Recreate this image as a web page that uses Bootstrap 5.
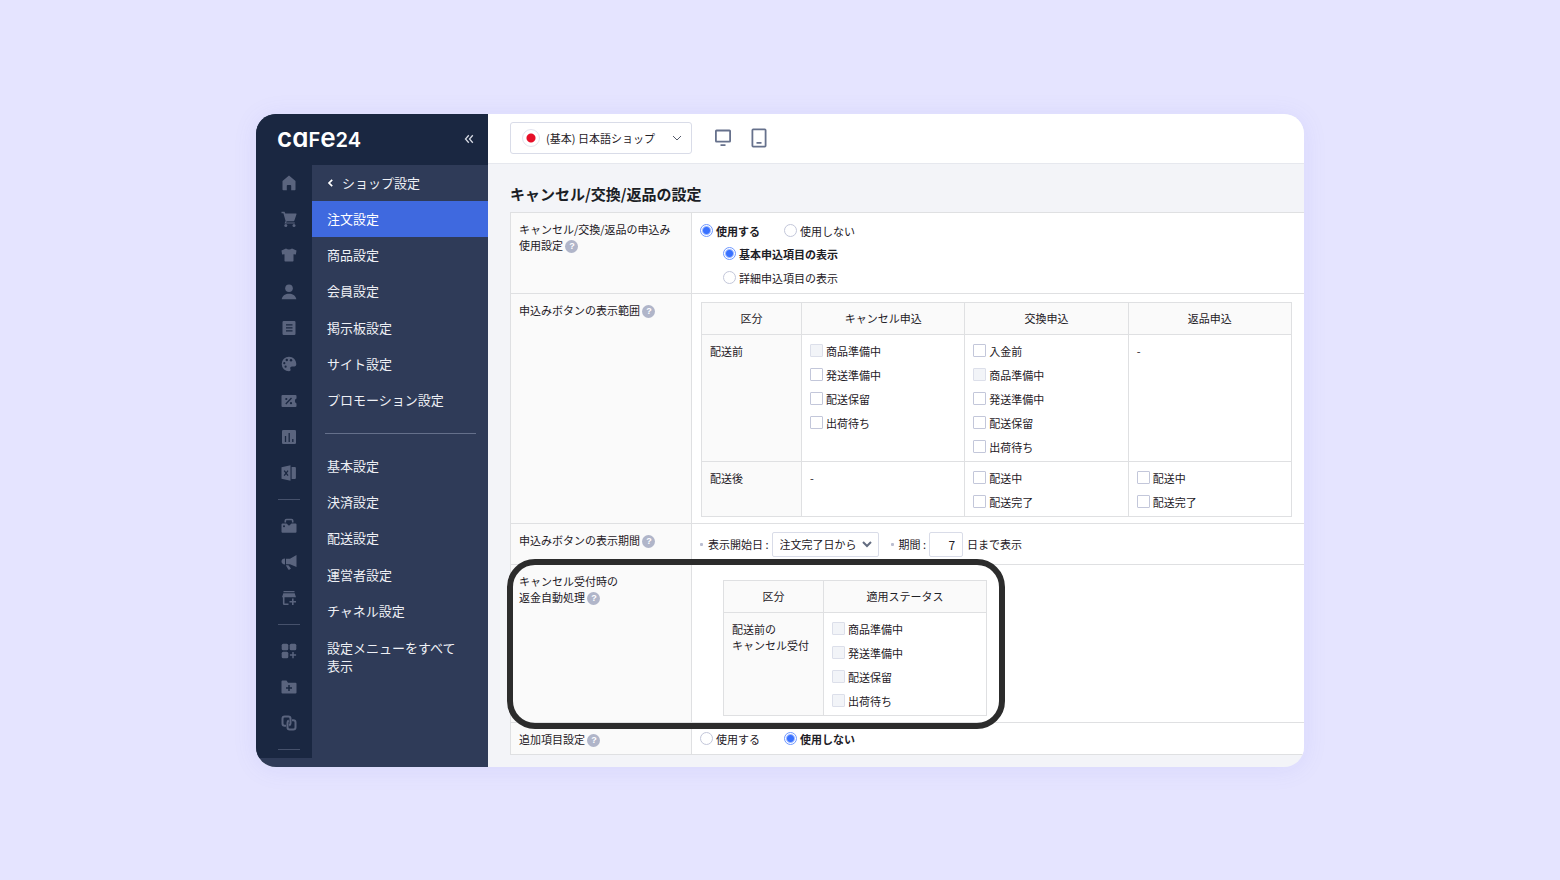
<!DOCTYPE html>
<html lang="ja">
<head>
<meta charset="utf-8">
<meta name="viewport" content="width=device-width, initial-scale=1">
<title>キャンセル/交換/返品の設定</title>
<link href="https://cdn.jsdelivr.net/npm/bootstrap@5.3.0/dist/css/bootstrap.min.css" rel="stylesheet">
<style>
  :root { --navy: #1a2741; --slate: #2f3b58; --active: #3f69df; --line: #dfe0e2; --ink: #1e2026; }
  body { font: 400 11px/16px "Noto Sans CJK JP", sans-serif; color: var(--ink); background: #e5e4ff; }
  .stage { padding: 24px 256px; }
  .app-window { border-radius: 20px; background: #f3f4f8; box-shadow: 0 2px 24px rgba(110, 110, 230, .1); }

  /* sidebar */
  .side { width: 232px; background: var(--slate); }
  .side-head { height: 51px; background: var(--navy); padding: 0 14px 0 21px; }
  .logo { font-family: Inter, sans-serif; font-weight: 600; color: #fff; font-size: 26px; line-height: 28px; font-feature-settings: "cv11"; }
  .logo .caps { font-size: 20px; }
  .fold { color: #d4d8e2; }
  .rail { width: 56px; background: var(--navy); color: #5a647e; }
  .rail-group a { color: inherit; padding-left: 9px; flex: 1; }
  .rail hr { width: 22px; margin: 7px 0 8px 22px; border-color: #5a647e; opacity: .7; }
  .rail svg { width: 18px; height: 18px; fill: currentColor; }
  .rail .outline { fill: none; stroke: currentColor; stroke-width: 2; }
  .g9 { min-height: 327px; }
  .g3 { min-height: 109px; }
  .menu { font-size: 13px; line-height: 18px; }
  .menu a { color: #eef0f5; padding: 9px 15px; flex: 1 1 auto; }
  .menu a.active { background: var(--active); color: #fff; }
  .menu hr { margin: 14px 12px 14px 13px; border-color: #8b95ad; opacity: .6; }
  .m7 { min-height: 254px; }
  .m5 { min-height: 182px; }

  /* top bar */
  .topbar { height: 50px; border-bottom: 1px solid #e6e8ee; padding: 0 22px; color: #66718c; }
  .topbar .btn { color: inherit; }
  .devices { gap: 20px; margin-left: 23px; }
  .shop-select { width: 182px; height: 32px; border-color: #d9dce8; border-radius: 3px; color: var(--ink); font-size: 11px; line-height: 16px; padding: 0 24px 0 35px;
    background: #fff url("data:image/svg+xml,%3Csvg xmlns='http://www.w3.org/2000/svg' width='10' height='6' fill='none' stroke='%23555b6b'%3E%3Cpath d='M1 1l4 4 4-4'/%3E%3C/svg%3E") no-repeat right 9px center; background-size: 10px 6px; }
  .flag { width: 18px; height: 18px; left: 12px; top: 7px; border: 1px solid #e2e3ee; border-radius: 50%; background: radial-gradient(circle, #e60f28 4px, #fff 5px); pointer-events: none; }

  /* settings */
  .main-pane { padding: 18px 0 12px 22px; }
  h1 { font-size: 15px; line-height: 24px; font-weight: 700; margin: 0 0 6px; color: #1b1e26; }
  .settings, .scope { border-collapse: collapse; color: inherit; }
  .settings { width: 100%; background: #fff; }
  .settings th, .settings td { border: 1px solid var(--line); vertical-align: top; }
  .settings > tbody > tr > th, .settings > tbody > tr > td { border-right: 0; }
  .settings th { font-weight: 400; background: #fafafa; padding: 8px 8px 7px; }
  .settings td { padding: 8px 8px 7px; }
  .settings .lbl { width: 181px; }
  .settings .wide { padding: 8px 12px 6px 9px; }
  .settings .inset { padding: 15px 8px 6px 31px; }
  .scope { table-layout: fixed; }
  .settings .scope thead th { text-align: center; padding: 8px; line-height: 15px; }
  .scope .kind { width: 100px; }
  .settings .scope tbody td { padding: 8px 8px 6px; }
  .opts { display: grid; gap: 8px; }
  .opt { display: flex; align-items: center; gap: 3px; line-height: 16px; }
  .opt .form-check-input { float: none; margin: 0; }
  .form-check-input { width: 13px; height: 13px; flex: none; border-color: #c3c7da; box-shadow: none; }
  .form-check-input[type=checkbox] { border-radius: 1px; }
  .form-check-input:disabled { background: #f2f4f8; border-color: #dcdfea; opacity: 1; }
  .form-check-input:disabled ~ label { opacity: 1; }
  .form-check-input[type=radio]:checked { background: radial-gradient(circle, #3971ff 0 3px, #fff 5px); border-color: #6f98ff; }
  .form-check-input:checked ~ label { font-weight: 700; }
  .help { width: 13px; height: 13px; border: 0; border-radius: 50%; background: #b0b5c9; color: #fff; font: 700 9px/13px "Liberation Sans", sans-serif; padding: 0; vertical-align: 1px; }
  .radios { padding-top: 2px; }
  .sub-opts { margin: 7px 0 0 23px; }
  .dot { width: 3px; height: 3px; margin-right: 5px; background: #b9bdd0; border-radius: 1px; }
  .day-select + .dot { margin-left: 12px; }
  .day-select { width: 107px; height: 25px; font-size: 11px; line-height: 16px; padding: 0 20px 0 7px; border-color: #d9dce8; border-radius: 2px; color: inherit;
    background: #fff url("data:image/svg+xml,%3Csvg xmlns='http://www.w3.org/2000/svg' width='10' height='7' fill='none' stroke='%23636c80' stroke-width='2'%3E%3Cpath d='M1 1l4 4 4-4'/%3E%3C/svg%3E") no-repeat right 6px center; background-size: 10px 7px; }
  .day-input { width: 34px; height: 25px; font-size: 12px; line-height: 16px; padding: 0 7px; border-color: #d9dce8; border-radius: 2px; color: inherit; text-align: right; }
  .period label { margin-right: 3px; }
  .focus-box { top: -6px; left: -4px; width: 498px; height: 170px; border: 6px solid #2c2c2c; border-radius: 28px; pointer-events: none; z-index: 2; }
</style>
</head>
<body>
<div class="stage min-vh-100 d-flex align-items-center">
  <div class="app-window d-flex w-100 overflow-hidden">

    <aside class="side flex-shrink-0 d-flex flex-column">
      <div class="side-head d-flex align-items-center justify-content-between">
        <a href="#" class="logo text-decoration-none">ca<span class="caps">F</span>e<span class="caps">24</span></a>
        <button type="button" class="fold btn p-0 border-0 lh-1" aria-label="メニューを閉じる">
          <svg class="d-block" width="10" height="10" viewBox="0 0 10 10" fill="none" stroke="currentColor" stroke-width="1.3"><path d="M4.8 1.2 1.5 5l3.3 3.8M8.8 1.2 5.5 5l3.3 3.8"/></svg>
        </button>
      </div>
      <div class="d-flex align-items-start">
        <nav class="rail flex-shrink-0" aria-label="メイン">
          <div class="rail-group g9 d-flex flex-column">
            <a href="#" class="d-flex align-items-center justify-content-center" aria-label="ホーム"><svg viewBox="0 0 18 18"><path d="M9 1.5 2.5 7v8.5q0 .8.8.8h3.5v-4.6q0-.8.8-.8h2.8q.8 0 .8.8v4.6h3.5q.8 0 .8-.8V7z"/></svg></a>
            <a href="#" class="d-flex align-items-center justify-content-center" aria-label="注文"><svg viewBox="0 0 18 18"><path d="M1.5 1.8h3l.8 1.700H16q.8 0 .5.800l-2.100 6.300q-.2.700-.9.700H6.700l-.6 1.300h8.700v.9H4.500l1.100-2.600L3.400 3.200H1.500z"/><circle cx="5.800" cy="15.500" r="1.500"/><circle cx="14" cy="15.500" r="1.500"/></svg></a>
            <a href="#" class="d-flex align-items-center justify-content-center" aria-label="商品"><svg viewBox="0 0 18 18"><path d="M6 2.500q3 2 6 0l4.500 2-.6 4-2.400-.3v6.600q0 .7-.7.7H5.200q-.7 0-.7-.7V8.200l-2.400.3-.6-4z"/></svg></a>
            <a href="#" class="d-flex align-items-center justify-content-center" aria-label="顧客"><svg viewBox="0 0 18 18"><circle cx="9" cy="5.200" r="3.800"/><path d="M1.700 16.200C2.500 12.500 5.500 10.800 9 10.800s6.500 1.700 7.300 5.400z"/></svg></a>
            <a href="#" class="d-flex align-items-center justify-content-center" aria-label="掲示板"><svg viewBox="0 0 18 18"><path fill-rule="evenodd" d="M3.700 2h10.600q1.200 0 1.200 1.200v11.600q0 1.200-1.200 1.200H3.700q-1.200 0-1.200-1.200V3.200Q2.500 2 3.700 2zM6 5.300v1.300h6.500V5.300zm0 3v1.300h6.500V8.300zm0 3v1.300h6.500v-1.300z"/></svg></a>
            <a href="#" class="d-flex align-items-center justify-content-center" aria-label="デザイン"><svg viewBox="0 0 18 18"><path d="M9 1.700a7.300 7.300 0 1 0 0 14.600c1.500 0 2-1 1.400-2.200-.5-1.200 0-2.600 1.700-2.600h2.200c1.400 0 2-1 2-2.200C16.300 4.800 13 1.700 9 1.700z"/><g fill="#1a2741"><circle cx="4.300" cy="8.200" r="1.100"/><circle cx="6.800" cy="5" r="1.200"/><circle cx="11" cy="5.200" r="1.200"/><circle cx="5.600" cy="11.700" r="1.100"/></g></svg></a>
            <a href="#" class="d-flex align-items-center justify-content-center" aria-label="プロモーション"><svg viewBox="0 0 18 18"><path d="M2.500 3h13q1 0 1 1v2.600q-1.600.5-1.600 2.400t1.600 2.400V14q0 1-1 1h-13q-1 0-1-1V4q0-1 1-1z"/><path d="m5.800 12 5.700-6" stroke="#1a2741" stroke-width="1.300"/><g fill="#1a2741"><circle cx="6.300" cy="7" r="1.100"/><circle cx="11" cy="11.200" r="1.100"/></g></svg></a>
            <a href="#" class="d-flex align-items-center justify-content-center" aria-label="統計"><svg viewBox="0 0 18 18"><rect x="2" y="2" width="14" height="14" rx="1.300"/><path d="M5.500 14V8M9.200 14V5M12.800 14v-3" stroke="#1a2741" stroke-width="1.300"/></svg></a>
            <a href="#" class="d-flex align-items-center justify-content-center" aria-label="エクセル"><svg viewBox="0 0 18 18"><path d="M1.500 3.300 10.500 1.300v15.400l-9-2zM11.600 3h3.300q1 0 1 1v10q0 1-1 1h-3.300z"/><path d="m4.200 6.600 3.800 5M8 6.600l-3.800 5" stroke="#1a2741" stroke-width="1.300"/></svg></a>
          </div>
          <hr>
          <div class="rail-group g3 d-flex flex-column">
            <a href="#" class="d-flex align-items-center justify-content-center" aria-label="マーケット"><svg viewBox="0 0 18 18"><path d="M2.500 6.500h4L9 8.700l2.500-2.200h4q1 0 1 1v7.300q0 1-1 1h-13q-1 0-1-1V7.500q0-1 1-1z"/><path d="M5.300 5.600V3.700q0-1.200 1.200-1.200h5q1.200 0 1.200 1.200v1.900" fill="none" stroke="currentColor" stroke-width="1.600"/><circle cx="4" cy="9.200" r="1" fill="#1a2741"/></svg></a>
            <a href="#" class="d-flex align-items-center justify-content-center" aria-label="広告"><svg viewBox="0 0 18 18"><path d="M16.500 2v12L10 11.300H6V5.700h4zM5 5.600v5.800C2.800 11.400 1.500 10.200 1.500 8.500S2.800 5.600 5 5.600zM5.800 12.300h2.600l2.600 3.300-1.700 1.200q-.5.200-1-.3z"/></svg></a>
            <a href="#" class="d-flex align-items-center justify-content-center" aria-label="チャネル"><svg viewBox="0 0 18 18"><path d="M3.500 2h11v1.200h-11zM3.300 4.200h11.400l1.300 4H2z"/><path d="M3.700 8v6.800q0 .5.500.5h4.300M12.800 9.500v6.500M9.500 12.800H16" fill="none" stroke="currentColor" stroke-width="1.600"/></svg></a>
          </div>
          <hr>
          <div class="rail-group g3 d-flex flex-column">
            <a href="#" class="d-flex align-items-center justify-content-center" aria-label="アプリ"><svg viewBox="0 0 18 18"><rect x="1.700" y="1.700" width="6.600" height="6.600" rx="1.500"/><rect x="9.700" y="1.700" width="6.600" height="6.600" rx="1.500"/><rect x="1.700" y="9.700" width="6.600" height="6.600" rx="1.500"/><path d="M13 10v6.200M9.900 13.100h6.200" stroke="currentColor" stroke-width="1.500"/></svg></a>
            <a href="#" class="d-flex align-items-center justify-content-center" aria-label="フォルダ"><svg viewBox="0 0 18 18"><path d="M2.500 2.500h4L8 4.700h7.500q1 0 1 1v8.800q0 1-1 1h-13q-1 0-1-1v-11q0-1 1-1z"/><path d="M9 7v6M6 10h6" stroke="#1a2741" stroke-width="1.500"/></svg></a>
            <a href="#" class="d-flex align-items-center justify-content-center" aria-label="連携"><svg class="outline" viewBox="0 0 18 18"><path d="M6 11.800H4.700q-2.200 0-2.200-2.200V4.700q0-2.200 2.200-2.200h3.600q2.200 0 2.200 2.200v4.600q0 1.500-1.300 2.200"/><path d="M12 6.200h1.300q2.200 0 2.200 2.200v4.900q0 2.200-2.200 2.200H9.700q-2.200 0-2.200-2.200V8.700q0-1.500 1.300-2.200"/></svg></a>
          </div>
          <hr>
        </nav>

        <nav class="menu flex-fill" aria-label="ショップ設定">
          <div class="m7 d-flex flex-column">
            <a href="#" class="text-decoration-none d-flex align-items-center"><svg class="me-2" width="7" height="8" viewBox="0 0 7 8" fill="none" stroke="#fff" stroke-width="1.700"><path d="M5.200.8 2 4l3.200 3.200"/></svg>ショップ設定</a>
            <a href="#" class="text-decoration-none active" aria-current="page">注文設定</a>
            <a href="#" class="text-decoration-none">商品設定</a>
            <a href="#" class="text-decoration-none">会員設定</a>
            <a href="#" class="text-decoration-none">掲示板設定</a>
            <a href="#" class="text-decoration-none">サイト設定</a>
            <a href="#" class="text-decoration-none">プロモーション設定</a>
          </div>
          <hr>
          <div class="m5 d-flex flex-column">
            <a href="#" class="text-decoration-none">基本設定</a>
            <a href="#" class="text-decoration-none">決済設定</a>
            <a href="#" class="text-decoration-none">配送設定</a>
            <a href="#" class="text-decoration-none">運営者設定</a>
            <a href="#" class="text-decoration-none">チャネル設定</a>
          </div>
          <a href="#" class="text-decoration-none d-block">設定メニューをすべて<br>表示</a>
        </nav>
      </div>
    </aside>

    <div class="flex-fill d-flex flex-column">
      <header class="topbar bg-white d-flex align-items-center">
        <div class="position-relative">
          <select class="form-select shop-select" aria-label="ショップ"><option>(基本) 日本語ショップ</option></select>
          <span class="flag position-absolute"></span>
        </div>
        <div class="devices d-flex">
          <button type="button" class="btn p-0 border-0 lh-1" aria-label="PC表示"><svg class="d-block" width="16" height="20" viewBox="0 0 16 20" fill="none" stroke="currentColor" stroke-width="1.800"><rect x=".9" y="2.500" width="14.200" height="11.200" rx=".6"/><path d="M5.500 17.200h5"/></svg></button>
          <button type="button" class="btn p-0 border-0 lh-1" aria-label="モバイル表示"><svg class="d-block" width="16" height="20" viewBox="0 0 16 20" fill="none" stroke="currentColor" stroke-width="1.800"><rect x="1.400" y="1.400" width="13.200" height="17.200" rx=".8"/><path d="M5.500 14.800h5"/></svg></button>
        </div>
      </header>

      <main class="main-pane">
        <h1>キャンセル/交換/返品の設定</h1>
        <table class="settings">
          <tbody>
          <tr>
            <th class="lbl" scope="row">キャンセル/交換/返品の申込み<br>使用設定 <button type="button" class="help" aria-label="ヘルプ">?</button></th>
            <td>
              <div class="radios">
                <div class="d-flex gap-4">
                  <div class="opt"><input class="form-check-input" type="radio" name="use" id="use1" checked><label for="use1">使用する</label></div>
                  <div class="opt"><input class="form-check-input" type="radio" name="use" id="use2"><label for="use2">使用しない</label></div>
                </div>
                <div class="opts sub-opts">
                  <div class="opt"><input class="form-check-input" type="radio" name="item" id="item1" checked><label for="item1">基本申込項目の表示</label></div>
                  <div class="opt"><input class="form-check-input" type="radio" name="item" id="item2"><label for="item2">詳細申込項目の表示</label></div>
                </div>
              </div>
            </td>
          </tr>
          <tr>
            <th class="lbl" scope="row">申込みボタンの表示範囲 <button type="button" class="help" aria-label="ヘルプ">?</button></th>
            <td class="wide">
              <table class="scope w-100">
                <thead><tr><th class="kind" scope="col">区分</th><th scope="col">キャンセル申込</th><th scope="col">交換申込</th><th scope="col">返品申込</th></tr></thead>
                <tbody>
                <tr>
                  <th scope="row">配送前</th>
                  <td><div class="opts">
                    <div class="opt"><input class="form-check-input" type="checkbox" id="a1" disabled><label for="a1">商品準備中</label></div>
                    <div class="opt"><input class="form-check-input" type="checkbox" id="a2"><label for="a2">発送準備中</label></div>
                    <div class="opt"><input class="form-check-input" type="checkbox" id="a3"><label for="a3">配送保留</label></div>
                    <div class="opt"><input class="form-check-input" type="checkbox" id="a4"><label for="a4">出荷待ち</label></div>
                  </div></td>
                  <td><div class="opts">
                    <div class="opt"><input class="form-check-input" type="checkbox" id="b1"><label for="b1">入金前</label></div>
                    <div class="opt"><input class="form-check-input" type="checkbox" id="b2" disabled><label for="b2">商品準備中</label></div>
                    <div class="opt"><input class="form-check-input" type="checkbox" id="b3"><label for="b3">発送準備中</label></div>
                    <div class="opt"><input class="form-check-input" type="checkbox" id="b4"><label for="b4">配送保留</label></div>
                    <div class="opt"><input class="form-check-input" type="checkbox" id="b5"><label for="b5">出荷待ち</label></div>
                  </div></td>
                  <td>-</td>
                </tr>
                <tr>
                  <th scope="row">配送後</th>
                  <td>-</td>
                  <td><div class="opts">
                    <div class="opt"><input class="form-check-input" type="checkbox" id="c1"><label for="c1">配送中</label></div>
                    <div class="opt"><input class="form-check-input" type="checkbox" id="c2"><label for="c2">配送完了</label></div>
                  </div></td>
                  <td><div class="opts">
                    <div class="opt"><input class="form-check-input" type="checkbox" id="d1"><label for="d1">配送中</label></div>
                    <div class="opt"><input class="form-check-input" type="checkbox" id="d2"><label for="d2">配送完了</label></div>
                  </div></td>
                </tr>
                </tbody>
              </table>
            </td>
          </tr>
          <tr>
            <th class="lbl" scope="row">申込みボタンの表示期間 <button type="button" class="help" aria-label="ヘルプ">?</button></th>
            <td>
              <div class="period d-flex align-items-center">
                <span class="dot"></span><label for="from">表示開始日 :</label>
                <select id="from" class="form-select day-select"><option>注文完了日から</option></select>
                <span class="dot"></span><label for="days">期間 :</label>
                <input id="days" class="form-control day-input" type="text" value="7"><span class="ms-1">日まで表示</span>
              </div>
            </td>
          </tr>
          <tr>
            <th class="lbl position-relative" scope="row">キャンセル受付時の<br>返金自動処理 <button type="button" class="help" aria-label="ヘルプ">?</button><span class="focus-box position-absolute"></span></th>
            <td class="inset">
              <table class="scope" style="width:264px">
                <thead><tr><th class="kind" scope="col">区分</th><th scope="col">適用ステータス</th></tr></thead>
                <tbody><tr>
                  <th scope="row">配送前の<br>キャンセル受付</th>
                  <td><div class="opts">
                    <div class="opt"><input class="form-check-input" type="checkbox" id="e1" disabled><label for="e1">商品準備中</label></div>
                    <div class="opt"><input class="form-check-input" type="checkbox" id="e2" disabled><label for="e2">発送準備中</label></div>
                    <div class="opt"><input class="form-check-input" type="checkbox" id="e3" disabled><label for="e3">配送保留</label></div>
                    <div class="opt"><input class="form-check-input" type="checkbox" id="e4" disabled><label for="e4">出荷待ち</label></div>
                  </div></td>
                </tr></tbody>
              </table>
            </td>
          </tr>
          <tr>
            <th class="lbl" scope="row">追加項目設定 <button type="button" class="help" aria-label="ヘルプ">?</button></th>
            <td>
              <div class="d-flex gap-4">
                <div class="opt"><input class="form-check-input" type="radio" name="extra" id="ex1"><label for="ex1">使用する</label></div>
                <div class="opt"><input class="form-check-input" type="radio" name="extra" id="ex2" checked><label for="ex2">使用しない</label></div>
              </div>
            </td>
          </tr>
          </tbody>
        </table>
      </main>
    </div>
  </div>
</div>
<script src="https://cdn.jsdelivr.net/npm/bootstrap@5.3.0/dist/js/bootstrap.bundle.min.js"></script>
</body>
</html>
